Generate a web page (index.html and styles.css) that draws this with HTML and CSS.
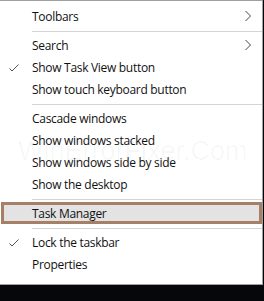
FILE: index.html
```html
<!DOCTYPE html>
<html>
<head>
<meta charset="utf-8">
<link rel="stylesheet" href="styles.css">
</head>
<body>
<div class="menu">
  <div class="item"><span class="label">Toolbars</span><svg class="chev" width="8" height="12" viewBox="0 0 8 12"><path d="M1.5 1 L6.5 6 L1.5 11" fill="none" stroke="#444" stroke-width="1"/></svg></div>
  <div class="sep"></div>
  <div class="item"><span class="label">Search</span><svg class="chev" width="8" height="12" viewBox="0 0 8 12"><path d="M1.5 1 L6.5 6 L1.5 11" fill="none" stroke="#444" stroke-width="1"/></svg></div>
  <div class="item"><svg class="check" width="10" height="8" viewBox="0 0 10 8"><path d="M0.5 4.5 L3 7 L9.5 0.5" fill="none" stroke="#555" stroke-width="1"/></svg><span class="label">Show Task View button</span></div>
  <div class="item"><span class="label">Show touch keyboard button</span></div>
  <div class="sep"></div>
  <div class="item"><span class="label">Cascade windows</span></div>
  <div class="item"><span class="label">Show windows stacked</span></div>
  <div class="item"><span class="label">Show windows side by side</span></div>
  <div class="item"><span class="label">Show the desktop</span></div>
  <div class="sep"></div>
  <div class="item active"><span class="label">Task Manager</span></div>
  <div class="sep"></div>
  <div class="item"><svg class="check" width="10" height="8" viewBox="0 0 10 8"><path d="M0.5 4.5 L3 7 L9.5 0.5" fill="none" stroke="#555" stroke-width="1"/></svg><span class="label">Lock the taskbar</span></div>
  <div class="item"><span class="label">Properties</span></div>
  <div class="watermark">WinErrorFixer.Com</div>
</div>
</body>
</html>
```
FILE: styles.css
```css
html, body {
  margin: 0;
  padding: 0;
  background: #05070b;
}
.menu {
  position: relative;
  width: 262px;
  height: 279px;
  background: #fff;
  border-top: 1px solid #a0a0a0;
  border-right: 1px solid #a0a0a0;
  border-bottom: 1px solid #a0a0a0;
  padding-top: 4px;
  box-sizing: content-box;
  font-family: "Open Sans", "Noto Sans", sans-serif;
  font-size: 12px;
  letter-spacing: -0.3px;
  color: #111;
  overflow: hidden;
}
.item {
  position: relative;
  height: 22px;
  display: flex;
  align-items: center;
  padding-left: 32px;
  padding-right: 10px;
  z-index: 1;
}
.label {
  flex: 1;
  white-space: nowrap;
}
.chev {
  flex: none;
}
.check {
  position: absolute;
  left: 9px;
  top: 8px;
}
.sep {
  height: 1px;
  background: #d4d4d4;
  margin: 4px 0 2px 32px;
}
.item.active {
  background: #e3e3e3;
  box-shadow: inset 0 0 0 3px #a77f66;
  margin-left: 1px;
  padding-left: 31px;
}
.watermark {
  position: absolute;
  left: 18px;
  top: 134px;
  font-family: "Liberation Sans", sans-serif;
  font-size: 27px;
  line-height: 32px;
  letter-spacing: 0;
  color: rgba(0, 0, 0, 0.035);
  white-space: nowrap;
}
```
